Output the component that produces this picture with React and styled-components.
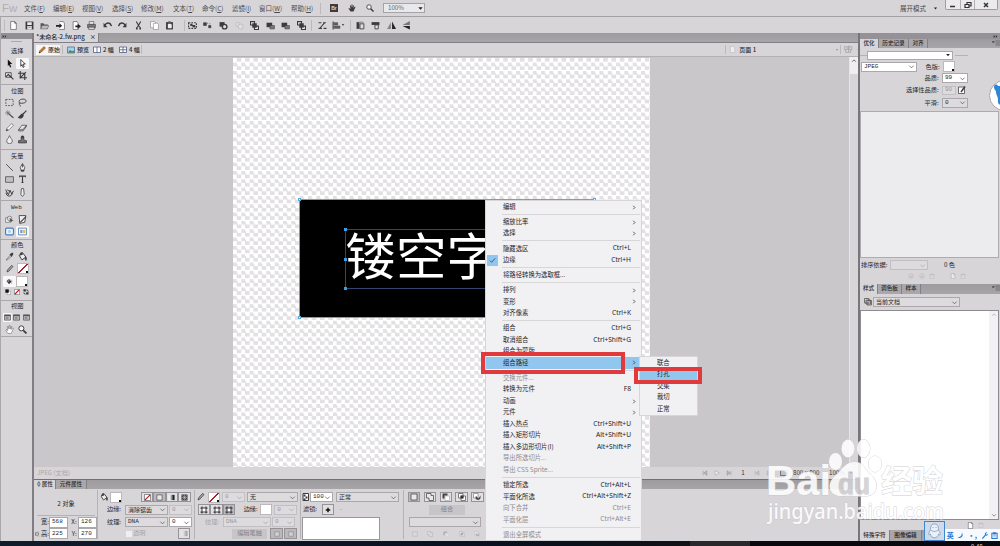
import React from "react";
import styled, { createGlobalStyle, css } from "styled-components";

const Global = createGlobalStyle`
  * { box-sizing: border-box; }
  body { margin: 0; overflow: hidden; background: #d7d5d8; }
`;

/* ---------- icons: 16-unit grid ---------- */
const S = "#3c3b3e";
const glyphs = {
  page: <path d="M3 1h7l3 3v11H3z M10 1v3h3" fill="#fff" stroke={S} />,
  save: <><path d="M1 1h14v14H1z" fill="#3a393c" /><path d="M4 2h8v5H4z M4 9h8v6H4z" fill="#e9e8ea" /><path d="M6 11h4" stroke={S} /></>,
  folder: <><path d="M1 4h5l2 2h6v8H1z" fill="#555" /><path d="M1 14l3-6h12l-3 6z" fill="#bbb" stroke="#666" /></>,
  importf: <><path d="M6 1h7l2 3v11H6" fill="#fff" stroke={S} /><path d="M0 7h6V4l5 4.500-5 4.500V10H0z" fill="#222" /></>,
  exportf: <><path d="M2 1h7l2 3v11H2z" fill="#fff" stroke={S} /><path d="M6 8h4V5l6 4.500-6 4.500V11H6z" fill="#222" /></>,
  print: <><path d="M4 1h8v5H4z" fill="#eee" stroke={S} /><path d="M1 6h14v6H1z" fill="#77767a" stroke={S} /><path d="M3 11h10v4H3z" fill="#ddd" stroke={S} /></>,
  undo: <><path d="M3 8c3-6 10-6 12 1" fill="none" stroke={S} strokeWidth="2.500" /><path d="M1 3v8h7z" fill={S} /></>,
  redo: <><path d="M13 8C10 2 3 2 1 9" fill="none" stroke={S} strokeWidth="2.500" /><path d="M15 3v8H8z" fill={S} /></>,
  cut: <><path d="M4 1l6 10M12 1L6 11" stroke={S} strokeWidth="2" /><path d="M5 11v4M11 11v4" stroke={S} strokeWidth="3" /></>,
  copy: <><path d="M1 1h7l2 2v9H1z" fill="#fff" stroke="#777" /><path d="M6 4h7l2 2v9H6z" fill="#fff" stroke="#777" /></>,
  paste: <><path d="M2 2h12v13H2z" fill="#333" /><path d="M5 5h6l1 2v6H5z" fill="#eee" /><path d="M6 0h4v3H6z" fill="#777" /></>,
  group: <><path d="M1 3h14v10H1z" fill="none" stroke={S} strokeDasharray="3 2" strokeWidth="2" /><path d="M4 5h4v4H4zM8 7h5v4H8z" fill={S} /></>,
  ungroup: <path d="M1 3h5v5H1zM10 8h4v4h-4zM7 4h2M11 5h2" fill={S} stroke={S} />,
  join: <><path d="M1 2h9v8H1z" fill={S} /><circle cx="10" cy="10" r="4" fill="#ddd" stroke={S} strokeWidth="2.500" /></>,
  split: <><circle cx="5" cy="6" r="4" fill="#ddd" stroke="#999" /><circle cx="10" cy="10" r="4.500" fill="#e9e9e9" stroke="#888" /></>,
  front: <><path d="M1 1h7v6H1zM8 9h7v6H8z" fill="#eee" stroke={S} strokeWidth="2" /><path d="M4 4h8v8H4z" fill={S} /></>,
  back: <><path d="M1 3h10v8H1z" fill={S} /><path d="M7 8h8v6H7z" fill="#777" stroke={S} /></>,
  snap: <><path d="M1 3h5M1 13h6M10 13h5M4 12l8-9M9 3h5" stroke={S} strokeWidth="2" /></>,
  align: <><path d="M2 1v14" stroke={S} strokeWidth="2" /><path d="M4 3h6v4H4zM4 9h10v4H4z" fill="#666" stroke={S} /></>,
  rotl: <><path d="M1 2h5v12H1z" fill={S} /><path d="M7 5h7v9H7z" fill="#ddd" stroke={S} strokeWidth="1.500" /><path d="M6 2h6l2 2" stroke={S} fill="none" /></>,
  rotr: <><path d="M1 2h14v5H1z" fill={S} /><path d="M7 7h6v7H7z" fill="#ddd" stroke={S} strokeWidth="1.500" /></>,
  fliph: <><path d="M7 2v12H0z" fill="#888" /><path d="M9 1l7 13H9z" fill="#222" /></>,
  flipv: <><path d="M14 7V0L1 7z" fill="#777" /><path d="M14 9v6L1 9z" fill="#222" /></>,
  hand: <path d="M5 15L1 9l1-1 3 2-1-7 1-1 2 5V1h2v6l2-5 1 1-1 5 3-3 1 1-4 9z" fill={S} />,
  handw: <path d="M5 15L1 9l1-1 3 2-1-7 1-1 2 5V1h2v6l2-5 1 1-1 5 3-3 1 1-4 9z" fill="#fff" stroke="#666" />,
  zoom: <><circle cx="6" cy="6" r="4.500" fill="#f4f4f4" stroke={S} strokeWidth="1.700" /><path d="M9.500 9.500L15 15" stroke={S} strokeWidth="3" /></>,
  arrow: <path d="M5 1l8 8H9l2 5-2 1-2-5-2 3z" fill="#111" />,
  arroww: <path d="M5 1l8 8H9l2 5-2 1-2-5-2 3z" fill="#fff" stroke="#111" strokeWidth="1.300" />,
  scale: <><path d="M1 3h10v8H1z" fill="#eee" stroke={S} strokeWidth="1.500" /><path d="M2 10l4-4 3 4M8 8l7 7" stroke={S} strokeWidth="2" fill="none" /></>,
  crop: <path d="M4 0v12h12M0 4h12v12M3 13L14 2" stroke={S} strokeWidth="2" fill="none" />,
  marquee: <path d="M1.500 2.500h13v11h-13z" fill="none" stroke={S} strokeWidth="1.400" strokeDasharray="3 2" />,
  lasso: <path d="M4 10C0 7 2 2 9 2s7 6 1 7c-5 1-7-1-8 1s3 2 2 5" fill="none" stroke={S} strokeWidth="1.600" />,
  wand: <><path d="M6 6l9 8" stroke={S} strokeWidth="2" /><path d="M5 0v10M0 5h10M2 2l6 6M8 2L2 8" stroke="#666" /></>,
  brush: <path d="M15 1L8 8M8 7c-4 0-3 5-7 6 4 3 9 0 8-5z" fill={S} stroke={S} strokeWidth="2" />,
  pencil: <><path d="M2 14l2-5 8-8 3 3-8 8z" fill="#fff" stroke={S} /><path d="M2 14l1-4 3 3z" fill={S} /></>,
  eraser: <path d="M1 12l6-8h8l-6 8zM1 12v2h8l6-8V4" fill="#eee" stroke={S} strokeWidth="1.300" />,
  drop: <path d="M8 1c1 4 5 6 5 10a5 4.500 0 0 1-10 0C3 7 7 5 8 1z" fill="#eee" stroke="#555" strokeWidth="1.400" />,
  stamp: <><circle cx="8" cy="4" r="3" fill={S} /><path d="M6 5h4l1 5h4v4H1v-4h4z" fill="#777" stroke={S} strokeWidth="1.400" /></>,
  line: <path d="M2 2l12 12" stroke={S} strokeWidth="1.500" />,
  pen: <><path d="M8 1L4 8l2 6h4l2-6zM8 2v6" fill="#eee" stroke={S} strokeWidth="1.400" /><path d="M5 12h6v3H5z" fill={S} /></>,
  rect: <path d="M1 3h14v10H1z" fill="#c2c1c4" stroke="#555" strokeWidth="1.500" />,
  type: <path d="M2 1h12v4l-2-2H9v10l2 1H5l2-1V3H4L2 5z" fill={S} />,
  freeform: <path d="M1 3l5 9 3-8 3 7 3-6M2 8c0 8 9 8 11 2M4 3l4 3" fill="none" stroke={S} strokeWidth="1.700" />,
  knife: <path d="M6 1h4l1 10-3 4-3-3z" fill="#eee" stroke="#555" strokeWidth="1.600" />,
  hotspot: <><path d="M1 5h7v8H1z" fill="#eee" stroke="#555" /><circle cx="8" cy="6" r="4" fill="#ddd" stroke="#555" /><path d="M8 5l7 5-3 1-2 3z" fill="#555" /></>,
  slice: <><path d="M2 1h12l-2 12-9 2z" fill="#eee" stroke={S} strokeWidth="1.500" /><path d="M4 13L14 3" stroke={S} strokeWidth="2" /></>,
  hide: <><rect x="1" y="2" width="14" height="12" rx="2" fill="#e9f3fd" stroke="#437eb9" strokeWidth="2" /><path d="M5 5v6h6V5z" fill="#a7cbed" stroke="#fff" /></>,
  show: <><path d="M1 2h14v12H1z" fill="#fff" stroke="#5279a4" strokeWidth="1.500" /><path d="M4 5h4v6H4z" fill="#739bc8" /><path d="M9 5h4v6H9z" fill="#e5b95a" /></>,
  dropper: <><path d="M2 14l7-8 2 2-7 6z" fill="#eee" stroke={S} /><path d="M8 4l5-3 2 2-3 6z" fill={S} /></>,
  bucket: <><path d="M2 6l6-5 6 8-7 5z" fill="#eee" stroke={S} strokeWidth="1.700" /><path d="M4 6C3 0 8-1 8 5M13 8c3 2 3 5 1 7-2-2-1-4-1-7" fill={S} stroke={S} /></>,
  penc: <path d="M2 14l1-4 8-9 3 2-8 9z" fill="#aaa" stroke={S} strokeWidth="1.500" />,
  fill: <><path d="M1 7l6-5 6 6-6 6z" fill={S} /><path d="M5 3v6M8 5h5v8" stroke="#aaa" fill="none" strokeWidth="2" /></>,
  none: <><path d="M1 1h14v14H1z" fill="#fff" stroke="#555" strokeWidth="1.500" /><path d="M14 2L2 14" stroke="#b51c2b" strokeWidth="3" /></>,
  swap: <path d="M2 1h5v5H2zM9 9h5v5H9zM9 2c4 0 5 2 5 5M2 9c0 4 3 5 5 5" fill={S} stroke={S} strokeWidth="1.500" />,
  bw: <><path d="M6 6h9v9H6z" fill="#fff" stroke="#555" /><path d="M1 1h9v9H1z" fill="#111" /></>,
  win: <><path d="M1 2h14v12H1z" fill="#bbb" stroke="#444" strokeWidth="1.500" /><path d="M1 2h14v3H1z" fill="#555" /><path d="M4 7h6v4H4z" fill="#888" /></>,
  pic: <><path d="M1 2h14v12H1z" fill="#a5d1ee" stroke="#3c7195" strokeWidth="1.500" /><path d="M2 13l4-5 4 3 3-2 2 4z" fill="#47813a" /></>,
  two: <path d="M1 2h14v11H1zM8 2v11" fill="#fff" stroke="#46577c" strokeWidth="1.500" />,
  four: <path d="M1 2h14v11H1zM8 2v11M1 7.500h14" fill="#fff" stroke="#46577c" strokeWidth="1.500" />,
  orange: <><path d="M2 14l2-5 8-8 3 3-8 8z" fill="#c77a28" stroke="#76430f" /><path d="M2 14l1-3 2 2z" fill="#222" /></>,
  solid: <path d="M2 2h12v12H2z" fill="#e9e8eb" stroke="#444" strokeWidth="1.500" />,
  grad: <><path d="M1 2h5v12H1z" fill="#eee" /><path d="M6 2h4v12H6z" fill="#999" /><path d="M10 2h5v12h-5z" fill="#222" /></>,
  pattern: <><path d="M1 1h14v14H1z" fill="#444" /><path d="M3 3l10 10M13 3L3 13M8 2v12M2 8h12" stroke="#ddd" /></>,
  stroke: <><path d="M4 4h8v8H4z" fill="#fff" stroke={S} strokeWidth="2" /><path d="M1 4h3M12 4h3M1 12h3M12 12h3M4 1v3M12 1v3M4 12v3M12 12v3" stroke={S} strokeWidth="2.500" /></>,
  union: <path d="M1 1h9v4h5v10H6v-5H1z" fill="#e9e8eb" stroke="#444" strokeWidth="1.500" />,
  punch: <><path d="M6 6h9v9H6z" fill="#fff" stroke="#999" /><path d="M1 1h10v4H5v6H1z" fill="#444" /></>,
  inter: <><path d="M1 1h9v9H1zM6 6h9v9H6z" fill="#fff" stroke="#555" strokeWidth="1.500" /><path d="M5 5h6v6H5z" fill="#333" /></>,
  cropp: <><path d="M1 1h9v9H1z" fill="#fff" stroke="#555" /><path d="M15 9a5 5 0 1 1-9-3l5 5 4-6z" fill="#444" /></>,
  add: <path d="M8 2v12M2 8h12" stroke="#111" strokeWidth="4" />,
  opacity: <><path d="M2 1h11v14H2z" fill="#fff" stroke={S} strokeWidth="2" /><path d="M3 3h4v4H3zM7 7h4v4H7zM3 11h4v3H3z" fill={S} /></>,
  chain: <><path d="M15 1H8v4M15 15H8v-4" stroke="#aaa" fill="none" /><rect x="4" y="5" width="8" height="6" fill="none" stroke="#555" strokeWidth="1.600" /></>,
  edit: <><path d="M1 2h12v13H1z" fill="#fff" stroke={S} strokeWidth="1.500" /><path d="M14 1L6 12" stroke={S} strokeWidth="3" /></>,
  trash: <path d="M3 5h10v10H3zM1 4h14M6 1h4" stroke="#999" fill="#ddd" strokeWidth="1.500" />,
  ball: <><circle cx="8" cy="8" r="6" fill="#ddd" stroke="#888" strokeWidth="1.500" /><path d="M4 8l4 4 5-5" fill="#999" /></>,
  docs: <path d="M1 1h9v9H1zM6 5h9v9H6zM4 4h9v8H4z" fill="#ddd" stroke="#555" strokeWidth="1.600" />,
  first: <path d="M3 2v12M13 2v12L5 8z" fill="#bbb" stroke="#777" />,
  play: <path d="M3 2v12l11-6z" fill="#eee" stroke="#888" />,
  last: <path d="M13 2v12M3 2v12l8-6z" fill="#bbb" stroke="#777" />,
  chev: <path d="M3 6l5 5 5-5" fill="none" stroke="#555" strokeWidth="1.700" />,
  up: <path d="M3 10l5-5 5 5" fill="none" stroke="#444" strokeWidth="2" />,
  right: <path d="M5 4l4 4-4 4" fill="none" stroke="#333" strokeWidth="1.800" />,
  tri: <path d="M3 5h10l-5 6z" fill="#222" />,
  check: <path d="M2 8l4 4 8-9" fill="none" stroke="#214c71" strokeWidth="1.900" />,
  moon: <path d="M11 1c6 8-3 16-10 11C8 12 12 8 11 1z" fill="#287bd2" />,
  wrench: <path d="M2 14l7-8c-1-4 3-6 5-5l-3 3 2 2 3-2c0 4-3 5-5 4l-7 8z" fill="#287bd2" />,
  clip: <><path d="M2 3h12v12H2z" fill="none" stroke="#287bd2" strokeWidth="2.500" /><path d="M5 1h6v4H5zM5 8h6M5 11h6" fill="#287bd2" stroke="#287bd2" /></>,
  menu: <path d="M0 5h5L2.500 8zM7 4h9M7 8h9M7 12h9" fill="#444" stroke="#555" strokeWidth="1.300" />,
  collapse: <path d="M2 3l5 5-5 5zM9 3l5 5-5 5z" fill="#333" />,
  fwpage: <path d="M3 1h7l3 3v11H3z" fill="#eee" stroke="#aaa" />,
  pages: <path d="M1 3h5v5H1zM9 3h5v5H9zM3 8v5h9V8M8 1v12" fill="none" stroke="#888" strokeWidth="1.500" />,
};

const Svg = styled.svg`
  flex: none;
  display: block;
  opacity: ${(p) => p.$o ?? 1};
  margin-left: ${(p) => p.$ml ?? 0}px;
`;
const Icon = ({ n, s = 9, o, ml }) => (
  <Svg width={s} height={s} viewBox="0 0 16 16" $o={o} $ml={ml}>{glyphs[n]}</Svg>
);

/* ---------- frame ---------- */
const Window = styled.div`
  position: relative;
  width: 1000px;
  height: 546px;
  display: flex;
  flex-direction: column;
  overflow: hidden;
  background: #d7d5d8;
  color: #29282a;
  font: 6.2px/1 "Noto Sans CJK SC", "Noto Sans", sans-serif;
  white-space: nowrap;
`;
const MenuBar = styled.header`
  height: 17px;
  flex: none;
  display: flex;
  align-items: center;
  border-bottom: 1px solid #a3a1a4;
`;
const Logo = styled.b`
  width: 23px;
  padding-left: 2px;
  color: #b2b0b3;
  font: 11.500px/15px "Liberation Sans", sans-serif;
`;
const MenuName = styled.span`
  width: ${(p) => p.$w}px;
  color: #4b494c;
  font-size: 6.500px;
  padding-left: 1px;
  u { text-underline-offset: 1px; text-decoration-thickness: 0.5px; }
`;
const Cell = styled.span`
  width: ${(p) => p.$w ?? 15.6}px;
  height: ${(p) => p.$h ?? 12}px;
  flex: none;
  display: flex;
  align-items: center;
  justify-content: center;
`;
const Divider = styled.i`
  width: 1px;
  height: ${(p) => p.$h ?? 11}px;
  flex: none;
  margin: 0 ${(p) => p.$mr ?? 0}px 0 ${(p) => p.$ml ?? 0}px;
  background: #bbb9bc;
`;
const Bridge = styled.b`
  width: 8px;
  height: 8px;
  background: #3d3b3e;
  color: #ddd;
  font: bold 5px/8px "Liberation Sans", sans-serif;
  text-align: center;
`;
const Spacer = styled.i`flex: 1;`;
const ZoomBox = styled.div`
  width: 42px;
  height: 10px;
  margin-left: 4px;
  display: flex;
  align-items: center;
  justify-content: space-between;
  padding-left: 4px;
  border: 1px solid #a5a3a6;
  background: #e9e8ea;
  color: #666;
`;
const WinButtons = styled.div`
  align-self: flex-start;
  display: flex;
  width: 53px;
  height: 10px;
  margin: 0 2px 0 7px;
  border: 1px solid #9f9da0;
  border-top: 0;
  border-radius: 0 0 2px 2px;
  background: #ebeaec;
`;
const WinButton = styled.span`
  width: ${(p) => p.$w}px;
  height: 9px;
  border-right: 1px solid #b2b0b3;
  display: flex;
  align-items: center;
  justify-content: center;
  &:last-child { border: 0; }
`;
const ToolBar = styled.div`
  height: 16px;
  flex: none;
  display: flex;
  align-items: center;
  padding-left: 3px;
  border-left: 1px solid #aaa;
`;
const Main = styled.main`
  height: 508px;
  flex: none;
  display: flex;
`;

/* ---------- tool palette ---------- */
const Palette = styled.aside`
  width: 34px;
  flex: none;
  border-right: 2px solid #807e82;
  border-left: 1px solid #aaa8ab;
`;
const PaletteHead = styled.div`
  height: 6px;
  background: #918f93;
  padding: 0 1px;
  display: flex;
  align-items: center;
`;
const Grip = styled.i`
  display: block;
  width: 11px;
  height: 3px;
  margin: 2px auto 0;
  border-top: 1px solid #aaa8ab;
`;
const Section = styled.section`
  height: ${(p) => p.$h}px;
  border-bottom: 1px solid #aaa8ab;
  padding-left: 2px;
`;
const SectionName = styled.div`
  height: ${(p) => p.$h ?? 12}px;
  display: flex;
  align-items: center;
  padding-left: 8px;
  font: ${(p) => (p.$mono ? '6px "Liberation Mono", monospace' : "inherit")};
`;
const ToolRow = styled.div`
  height: ${(p) => p.$h ?? 12.3}px;
  display: flex;
  align-items: center;
`;
const Tool = styled.span`
  width: ${(p) => p.$w ?? 13}px;
  height: ${(p) => p.$h ?? 11.5}px;
  display: flex;
  align-items: center;
  justify-content: center;
  border-radius: 1px;
  background: ${(p) => (p.$on ? "#f8f7f9" : "none")};
`;

/* ---------- workspace ---------- */
const Work = styled.div`
  width: 824px;
  flex: none;
  display: flex;
  flex-direction: column;
`;
const TabStrip = styled.div`
  height: ${(p) => p.$h}px;
  flex: none;
  display: flex;
  align-items: stretch;
  background: linear-gradient(#9d9b9e, #a7a5a8);
  border-bottom: ${(p) => (p.$line ? "1px solid #828084" : 0)};
`;
const Tab = styled.span`
  width: ${(p) => p.$w}px;
  display: flex;
  align-items: center;
  justify-content: center;
  gap: 5px;
  background: ${(p) => (p.$on ? "#d7d5d8" : "#a9a7aa")};
  border-right: 1px solid #828084;
  font-size: ${(p) => p.$fs ?? 5.6}px;
  font-weight: 500;
`;
const ViewRow = styled.div`
  height: 14px;
  flex: none;
  display: flex;
  align-items: center;
  border-bottom: 1px solid #b2b0b3;
  padding-left: 2px;
`;
const ViewMode = styled.span`
  width: ${(p) => p.$w}px;
  height: 10px;
  display: flex;
  align-items: center;
  gap: 2px;
  padding-left: 2px;
  font-size: 6px;
  font-weight: 500;
  background: ${(p) => (p.$on ? "#f6f5f7" : "none")};
`;
const Stage = styled.div`
  height: 410px;
  flex: none;
  display: flex;
  background: #c9c7ca;
`;
const Artboard = styled.div`
  position: relative;
  width: 417px;
  margin: 1px auto 0 199px;
  background: repeating-conic-gradient(#e2e0e3 0 25%, #fff 0 50%) 0 0 / 8.333px 8.333px;
`;
const BlackRect = styled.div`
  position: absolute;
  left: 66px;
  top: 141px;
  width: 296px;
  height: 119px;
  border: 1px solid #5fa9cf;
  border-radius: 2px;
  background: #000;
`;
const TextBox = styled.div`
  position: absolute;
  left: 44.500px;
  top: 29px;
  width: 207px;
  height: 60px;
  border: 1px solid #30476f;
  color: #fff;
  font: 400 50.500px/46px "Noto Sans CJK SC", sans-serif;
`;
const Handle = styled.i`
  position: absolute;
  left: ${(p) => p.$x}px;
  top: ${(p) => p.$y}px;
  width: 3px;
  height: 3px;
  background: ${(p) => (p.$open ? "#fff" : "#3ba0e3")};
  border: ${(p) => (p.$open ? "1px solid #5aa8d2" : 0)};
`;
const VScroll = styled.div`
  width: ${(p) => p.$w ?? 9}px;
  flex: none;
  display: flex;
  flex-direction: column;
  align-items: center;
  justify-content: space-between;
  background: #d7d5d8;
  border-left: 1px solid #e6e5e7;
`;
const ScrollTop = styled.i`
  width: 100%;
  height: 17px;
  padding-top: 1px;
  background: #efeef0;
`;
const Status = styled.div`
  height: 13px;
  flex: none;
  display: flex;
  align-items: center;
  padding: 0 0 0 3px;
  border-bottom: 1.500px solid #727074;
  color: #aaa8ab;
`;
const StatusNums = styled.span`
  width: ${(p) => p.$w}px;
  color: #333;
`;

/* ---------- form parts ---------- */
const Row = styled.div`
  height: ${(p) => p.$h ?? 12}px;
  flex: none;
  display: flex;
  align-items: center;
  padding-left: ${(p) => p.$pl ?? 0}px;
`;
const Label = styled.span`
  width: ${(p) => p.$w}px;
  flex: none;
  text-align: ${(p) => (p.$right ? "right" : "left")};
  color: ${(p) => (p.$dim ? "#a7a5a8" : "#29282a")};
  font-size: ${(p) => p.$fs ?? 6.2}px;
`;
const mono = css`font-family: "Liberation Mono", "Noto Sans CJK SC", monospace;`;
const Field = styled.span`
  width: ${(p) => p.$w}px;
  height: ${(p) => p.$h ?? 10}px;
  flex: none;
  margin-left: ${(p) => p.$ml ?? 0}px;
  padding: 0 1px 0 2px;
  display: flex;
  align-items: center;
  justify-content: space-between;
  border: 1px solid ${(p) => (p.$dim ? "#c1bfc2" : "#aaa8ab")};
  background: ${(p) => (p.$white ? "#fff" : "#dddbde")};
  color: ${(p) => (p.$dim ? "#99979a" : "#29282a")};
  font-size: 6px;
  ${(p) => p.$mono && mono}
`;
const Select = ({ children, o, ...rest }) => (
  <Field {...rest}><span>{children}</span><Icon n="chev" s={7} o={rest.$dim ? 0.4 : 1} /></Field>
);
const Swatch = styled.span`
  width: 12px;
  height: 11px;
  flex: none;
  margin-left: ${(p) => p.$ml ?? 0}px;
  border: 1px solid #bbb9bc;
  background:
    linear-gradient(#111, #111) 100% 100% / ${(p) => (p.$plain ? 0 : 2)}px 2px no-repeat,
    ${(p) => (p.$none ? "linear-gradient(135deg, #fff 44%, #a9222f 44% 56%, #fff 56%)" : "#fff")};
`;
const IconButton = styled.span`
  width: ${(p) => p.$w ?? 12.4}px;
  height: 10.500px;
  flex: none;
  margin-left: ${(p) => p.$ml ?? 0}px;
  border: 1px solid #959397;
  display: flex;
  align-items: center;
  justify-content: center;
  background: ${(p) => (p.$on ? "#bbb9bc" : "#e2e0e3")};
`;
const TextButton = styled.span`
  width: ${(p) => p.$w}px;
  height: 10px;
  margin-left: ${(p) => p.$ml ?? 0}px;
  display: flex;
  align-items: center;
  justify-content: center;
  background: #c7c5c8;
  color: #858387;
`;
const CheckBox = styled.i`
  width: 6px;
  height: 6px;
  margin-left: 28px;
  margin-right: 1px;
  background: #efeef0;
`;
const Props = styled.div`
  height: 52px;
  flex: none;
  display: flex;
`;
const Group = styled.div`
  width: ${(p) => p.$w}px;
  flex: none;
  margin: 1px 0 2px;
  padding-top: ${(p) => p.$pt ?? 1}px;
  border-right: ${(p) => (p.$last ? 0 : "1px solid #b4b2b5")};
`;
const Heading = styled.div`
  height: 26px;
  margin: 0 2px 0.500px 3px;
  padding-top: 3px;
  display: flex;
  align-items: center;
  justify-content: center;
  border-bottom: 1px solid #b4b2b5;
  font-size: 6.300px;
`;
const FilterGroup = styled.div`display: flex; flex-direction: column;`;
const FilterList = styled.div`
  width: 78px;
  height: 23px;
  margin: 1px 0 0 1px;
  border: 1px solid #99979a;
  background: #fff;
`;

/* ---------- right docks ---------- */
const Dock = styled.aside`
  width: 142px;
  flex: none;
  display: flex;
  flex-direction: column;
  border-left: 2px solid #78767a;
`;
const DockHead = styled.div`
  height: 6px;
  flex: none;
  display: flex;
  align-items: center;
  justify-content: flex-end;
  padding-right: 2px;
  background: #949296;
`;
const Presets = styled.div`
  height: 13px;
  flex: none;
  display: flex;
  align-items: center;
  padding-top: 1px;
  i { width: 7px; height: 1px; background: #b4b2b5; }
  i:last-child { width: 13px; margin-left: 2px; }
`;
const ColorList = styled.div`
  height: 147px;
  flex: none;
  margin-right: 1px;
  border: 1px solid #adabad;
  background: #ecebee;
`;
const StyleList = styled.div`
  height: 210px;
  flex: none;
  margin-right: 1px;
  display: flex;
  justify-content: flex-end;
  border: 1px solid #8d8b8f;
  background: #fff;
`;
const StyleScroll = styled.div`
  width: 9px;
  display: flex;
  flex-direction: column;
  justify-content: space-between;
  align-items: center;
  padding: 1px 0;
  background: #f2f1f3;
`;
const TaskBar = styled.footer`
  height: 5px;
  flex: none;
  background: linear-gradient(90deg, #101b2b, #08111f 50%, #101216 69%, #29292c 69% 75%, #07090f 75%);
  overflow: hidden;
  padding-left: 971px;
  color: #ddd;
  font-size: 6px;
  line-height: 12px;
`;

/* ---------- popups ---------- */
const Popup = styled.nav`
  position: absolute;
  left: ${(p) => p.$x}px;
  top: ${(p) => p.$y}px;
  width: ${(p) => p.$w}px;
  height: ${(p) => p.$h}px;
  padding-top: ${(p) => p.$pt}px;
  background: #f1f0f2;
  border: 1px solid #d7d5d8;
`;
const Item = styled.div`
  height: 11.520px;
  display: flex;
  align-items: center;
  padding-right: ${(p) => (p.$arrow ? 3 : 10)}px;
  color: ${(p) => (p.$dim ? "#8d8b8f" : "#252426")};
  background: ${(p) => (p.$on ? "#91c6ef" : "none")};
  font-size: 6.350px;
`;
const Gutter = styled.span`
  width: ${(p) => p.$w}px;
  flex: none;
`;
const Checked = styled.span`
  width: 11px;
  height: 11px;
  display: flex;
  align-items: center;
  justify-content: center;
  margin-left: 1px;
  background: #91c6ef;
`;
const Caption = styled.span`flex: 1;`;
const Keys = styled.span`
  font-family: "Noto Sans", sans-serif;
  font-size: 6.650px;
`;
const Rule = styled.div`
  height: 3.550px;
  padding: 1px 1px 0 16px;
  &::before { content: ""; display: block; height: 1px; background: #d7d6d9; }
`;
const RedFrame = styled.div`
  position: absolute;
  left: ${(p) => p.$x}px;
  top: ${(p) => p.$y}px;
  width: ${(p) => p.$w}px;
  height: ${(p) => p.$h}px;
  border: 4px solid #e13a3d;
`;

/* ---------- overlays ---------- */
const Watermark = styled.div`
  position: absolute;
  left: 765px;
  top: 436px;
  width: 185px;
  height: 92px;
  opacity: 0.88;
  color: #fff;
  svg { display: block; overflow: visible; }
`;
const Badge = styled.div`
  position: absolute;
  left: 989px;
  top: 80px;
  width: 31px;
  height: 31px;
  border: 1px solid #aaa8ab;
  border-radius: 50%;
  background: #fff;
`;
const Ime = styled.div`
  position: absolute;
  left: 924px;
  top: 521px;
  display: flex;
  align-items: flex-end;
`;
const ImeLogo = styled.div`
  width: 21px;
  height: 20px;
  border: 1px solid #3e86cf;
  background: #cfdbea;
`;
const ImeBar = styled.div`
  width: 55px;
  height: 12px;
  display: flex;
  align-items: center;
  justify-content: space-around;
  background: #f6f9fd;
  color: #287bd2;
  font-weight: 700;
  font-size: 7px;
`;

const menus = [["文件", "F", 29], ["编辑", "E", 29], ["视图", "V", 30], ["选择", "S", 29], ["修改", "M", 32], ["文本", "T", 29], ["命令", "C", 30], ["滤镜", "I", 27], ["窗口", "W", 32], ["帮助", "H", 28]];
const bar1 = ["page", "save", "folder", "importf", "exportf", "print", "undo", "redo", "cut", "copy", "paste"];
const bar2 = ["group", "ungroup", "join", "split", "front", "back", "back", "front"];
const bar3 = ["rotl", "rotr", "fliph", "flipv"];

const context = [
  ["编辑", ">"], 0,
  ["缩放比率", ">"], ["选择", ">"], 0,
  ["隐藏选区", "Ctrl+L"], ["边缘", "Ctrl+H", "check"], 0,
  ["将路径转换为选取框...", ""], 0,
  ["排列", ">"], ["变形", ">"], ["对齐像素", "Ctrl+K"], 0,
  ["组合", "Ctrl+G"], ["取消组合", "Ctrl+Shift+G"], ["组合为蒙版", ""], ["组合路径", ">", "on"], 0,
  ["交换元件...", "", "dim"], ["转换为元件", "F8"], ["动画", ">"], ["元件", ">"],
  ["插入热点", "Ctrl+Shift+U"], ["插入矩形切片", "Alt+Shift+U"], ["插入多边形切片(I)", "Alt+Shift+P"],
  ["导出所选切片...", "", "dim"], ["导出 CSS Sprite...", "", "dim"], 0,
  ["锁定所选", "Ctrl+Alt+L"], ["平面化所选", "Ctrl+Alt+Shift+Z"],
  ["向下合并", "Ctrl+E", "dim"], ["平面化层", "Ctrl+Alt+E", "dim"], 0,
  ["退出全屏模式", "", "dim"],
];

const Pair = ({ a, b, on, h }) => (
  <ToolRow $h={h}><Tool><Icon n={a} /></Tool><Tool $on={on}><Icon n={b} /></Tool></ToolRow>
);

function ToolPalette() {
  return (
    <Palette>
      <PaletteHead><Icon n="collapse" s={5} /></PaletteHead>
      <Grip />
      <Section $h={41}>
        <SectionName $h={13.5}>选择</SectionName>
        <Pair a="arrow" b="arroww" on /><Pair a="scale" b="crop" />
      </Section>
      <Section $h={65}>
        <SectionName $h={11.5}>位图</SectionName>
        <Pair a="marquee" b="lasso" /><Pair a="wand" b="brush" /><Pair a="pencil" b="eraser" /><Pair a="drop" b="stamp" />
      </Section>
      <Section $h={51}>
        <SectionName $h={11.5}>矢量</SectionName>
        <Pair a="line" b="pen" /><Pair a="rect" b="type" /><Pair a="freeform" b="knife" />
      </Section>
      <Section $h={39}>
        <SectionName $mono>Web</SectionName>
        <Pair a="hotspot" b="slice" /><Pair a="hide" b="show" on />
      </Section>
      <Section $h={61}>
        <SectionName $h={10}>颜色</SectionName>
        <Pair a="dropper" b="bucket" />
        <ToolRow $h={12.7}><Tool><Icon n="penc" s={8} /></Tool><Swatch $none $ml={1} /></ToolRow>
        <ToolRow $h={12.5}><Tool $on $h={11}><Icon n="fill" s={7} /></Tool><Swatch $ml={0} /></ToolRow>
        <ToolRow $h={10}><Tool $w={9}><Icon n="bw" s={6} /></Tool><Tool $w={9}><Icon n="none" s={6} /></Tool><Tool $w={9}><Icon n="swap" s={6} /></Tool></ToolRow>
      </Section>
      <Section $h={36}>
        <SectionName $h={10}>视图</SectionName>
        <ToolRow $h={12}><Tool $w={9} $h={9} $on><Icon n="win" s={7} /></Tool><Tool $w={9}><Icon n="win" s={7} /></Tool><Tool $w={10}><Icon n="win" s={7} /></Tool></ToolRow>
        <Pair a="handw" b="zoom" h={12} />
      </Section>
    </Palette>
  );
}

function Properties() {
  return (
    <Props>
      <Group $w={64} $pt={0}>
        <Heading>2 对象</Heading>
        <Row $h={11.6} $pl={0}><Icon n="chain" s={6} o={0} /><Label $w={9} $right $fs={6.3}>宽:</Label><Field $w={19} $h={11} $white $mono>568</Field><Label $w={10} $right>X:&nbsp;</Label><Field $w={19} $h={11} $white $mono>126</Field></Row>
        <Row $h={11.6} $pl={0}><Icon n="chain" s={6} /><Label $w={9} $right $fs={6.3}>高:</Label><Field $w={19} $h={11} $white $mono>225</Field><Label $w={10} $right>Y:&nbsp;</Label><Field $w={19} $h={11} $white $mono>270</Field></Row>
      </Group>
      <Group $w={97}>
        <Row $pl={2}><Icon n="bucket" s={8} /><Swatch $ml={2} /><IconButton $ml={19}><Icon n="none" s={7} /></IconButton><IconButton $on><Icon n="solid" s={7} /></IconButton><IconButton><Icon n="grad" s={7} /></IconButton><IconButton><Icon n="pattern" s={7} /></IconButton></Row>
        <Row $h={13} $pl={9}><Label $w={18}>边缘:</Label><Select $w={43}>消除锯齿</Select><Select $w={23} $ml={1} $dim $mono>0</Select></Row>
        <Row $pl={9}><Label $w={18}>纹理:</Label><Select $w={43} $mono>DNA</Select><Select $w={23} $ml={1} $white $mono>0</Select></Row>
        <Row $h={11}><CheckBox /><Label $w={45} $dim>透明</Label><IconButton><Icon n="grad" s={7} o={0.3} /></IconButton></Row>
      </Group>
      <Group $w={106}>
        <Row $pl={2}><Icon n="penc" s={8} /><Swatch $none $ml={3} /><Select $w={23} $ml={2} $dim $mono>0</Select><Select $w={51} $ml={2}>无</Select></Row>
        <Row $h={13} $pl={3}><IconButton><Icon n="stroke" s={8} /></IconButton><IconButton><Icon n="stroke" s={8} /></IconButton><IconButton $on><Icon n="stroke" s={8} /></IconButton><Label $w={24} $right>边缘:&nbsp;</Label><Swatch $plain $ml={1} /><Select $w={23} $ml={2} $dim $mono>0</Select></Row>
        <Row $pl={10}><Label $w={18} $dim>纹理:</Label><Select $w={48} $dim $mono>DNA</Select><Select $w={23} $ml={1} $dim $mono>0</Select></Row>
        <Row $h={11} $pl={37}><TextButton $w={35}>编辑笔触</TextButton><IconButton $on $w={13} $ml={3}><Icon n="solid" s={6} o={0.5} /></IconButton><IconButton $on $w={13} $ml={1}><Icon n="solid" s={6} o={0.5} /></IconButton></Row>
      </Group>
      <Group $w={103}>
        <FilterGroup>
          <Row $pl={1}><Icon n="opacity" s={8} /><Select $w={23} $white $mono>100</Select><Select $w={63} $ml={3}>正常</Select></Row>
          <Row $h={13} $pl={2}><Label $w={19}>滤镜:</Label><IconButton><Icon n="add" s={6} /></IconButton><Label $w={8} $right $dim>–</Label></Row>
          <FilterList />
        </FilterGroup>
      </Group>
      <Group $w={90} $last>
        <Row $pl={4}>{["solid", "union", "punch", "inter", "cropp"].map((n, i) => <IconButton key={n} $on={!i} $ml={i ? 3.4 : 0}><Icon n={n} s={8} /></IconButton>)}</Row>
        <Row $h={13} $pl={25}><TextButton $w={36}>组合</TextButton></Row>
        <Row $pl={5}><Select $w={72} /></Row>
        <Row $h={11} $pl={3}>{["solid", "union", "punch", "inter", "cropp"].map((n) => <Cell key={n}><Icon n={n} s={6} o={0.25} /></Cell>)}</Row>
      </Group>
    </Props>
  );
}

function Docks() {
  return (
    <Dock>
      <DockHead><Icon n="collapse" s={5} /></DockHead>
      <TabStrip $h={9}><Tab $on $w={19}>优化</Tab><Tab $w={30}>历史记录</Tab><Tab $w={19}>对齐</Tab><Spacer /><Icon n="menu" s={8} /></TabStrip>
      <Presets><i /><Field $w={86} $h={9} $white><span /><Icon n="tri" s={6} /></Field><i /></Presets>
      <Row $h={11.5} $pl={1}><Select $w={56} $white $mono>JPEG</Select><Label $w={24} $right>色版:&nbsp;</Label><Swatch $ml={2} /></Row>
      <Row $h={11.5}><Label $w={80} $right>品质:&nbsp;</Label><Select $w={26} $ml={2} $white $mono>99</Select></Row>
      <Row $h={12.5}><Label $w={80} $right>选择性品质:&nbsp;</Label><Field $w={14} $ml={2} $h={9} $dim $mono>90</Field><Icon n="edit" s={8} ml={2} /></Row>
      <Row $h={12.5}><Label $w={80} $right>平滑:&nbsp;</Label><Select $w={26} $ml={2} $mono>0</Select></Row>
      <Spacer />
      <ColorList />
      <Row $h={14} $pl={1}><Label $w={29}>排序依据:</Label><Select $w={38} $dim /><Label $w={27} $right>0 色</Label></Row>
      <Row $h={8} $pl={46}>{["ball", "ball", "trash", "", "page", "trash"].map((n, i) => <Cell key={i} $w={10.4}>{n && <Icon n={n} s={6} o={0.45} />}</Cell>)}</Row>
      <Row $h={4} />
      <TabStrip $h={10}><Tab $on $w={18}>样式</Tab><Tab $w={24}>调色板</Tab><Tab $w={19}>样本</Tab><Spacer /><Icon n="menu" s={8} /></TabStrip>
      <Row $h={16} $pl={4}><Icon n="docs" s={8} /><Select $w={87} $ml={1}>当前文档</Select></Row>
      <StyleList><StyleScroll><Icon n="up" s={6} o={0.4} /><Icon n="chev" s={6} /></StyleScroll></StyleList>
      <Row $h={10} $pl={107}><Icon n="page" s={7} /><Icon n="trash" s={6} ml={4} o={0.4} /></Row>
      <TabStrip $h={11}><Tab $on $w={30}>特殊字符</Tab><Tab $w={32}>图像编辑</Tab><Spacer /></TabStrip>
    </Dock>
  );
}

function ContextMenu() {
  return (
    <Popup $x={485} $y={200} $w={157} $h={341} $pt={0.3}>
      {context.map((it, i) => !it ? <Rule key={i} /> : (
        <Item key={i} $arrow={it[1] === ">"} $on={it[2] === "on"} $dim={it[2] === "dim"}>
          <Gutter $w={17}>{it[2] === "check" && <Checked><Icon n="check" s={7} /></Checked>}</Gutter>
          <Caption>{it[0]}</Caption>
          {it[1] === ">" ? <Icon n="right" s={7} /> : <Keys>{it[1]}</Keys>}
        </Item>
      ))}
    </Popup>
  );
}

function BaiduMark() {
  const st = { stroke: "#c9c8cb", strokeWidth: 0.9, paintOrder: "stroke" };
  return (
    <Watermark>
      <svg width="185" height="92" fill="#fff" fontFamily="'Liberation Sans', sans-serif" {...st}>
        <ellipse cx="70.500" cy="25.500" rx="6.500" ry="8.500" />
        <ellipse cx="83" cy="12.500" rx="6.500" ry="9" />
        <ellipse cx="98.500" cy="12.500" rx="6.500" ry="9" />
        <ellipse cx="110" cy="28" rx="6.500" ry="8" />
        <path d="M90 26c8 0 10 7 15 12 10 8 8 21-3 22-9 1-15-1-24 0-14 1-17-12-8-20 7-6 10-14 20-14z" />
        <text x="1" y="59" fontSize="42" fontWeight="bold" textLength="65" lengthAdjust="spacingAndGlyphs">Bai</text>
        <text x="73" y="58" fontSize="29" fontWeight="bold" fill="#d2d0d4" textLength="32" lengthAdjust="spacingAndGlyphs">du</text>
        <text x="116" y="56" fontSize="31" fontWeight="bold" fontFamily="'Noto Sans CJK SC', sans-serif">经验</text>
        <text x="3" y="83" fontSize="21" fontWeight="500" textLength="176" lengthAdjust="spacingAndGlyphs" fontFamily="'Noto Sans', sans-serif">jingyan.baidu.com</text>
      </svg>
    </Watermark>
  );
}

export default function App() {
  return (
    <Window>
      <Global />
      <MenuBar>
        <Logo>Fw</Logo>
        {menus.map(([t, k, w]) => <MenuName key={k} $w={w}>{t}(<u>{k}</u>)</MenuName>)}
        <Divider $ml={2} $mr={4} />
        <Cell $w={18}><Bridge>Br</Bridge></Cell>
        <Cell $w={18}><Icon n="hand" s={8} /></Cell>
        <Cell $w={18}><Icon n="zoom" s={8} /></Cell>
        <ZoomBox>100%<Icon n="tri" s={7} /></ZoomBox>
        <Spacer />
        <MenuName $w={34}>展开模式</MenuName>
        <Icon n="tri" s={5} />
        <WinButtons>
          <WinButton $w={15}><svg width="8" height="8"><path d="M1 5.500h5" stroke="#333" strokeWidth="1.500" /></svg></WinButton>
          <WinButton $w={15}><svg width="8" height="8"><path d="M3 3V1.500h4V5H5.500M1 3.500h4v3H1z" fill="none" stroke="#333" strokeWidth="1.200" /></svg></WinButton>
          <WinButton $w={22}><svg width="8" height="8"><path d="M2 2l4 4M6 2L2 6" stroke="#333" strokeWidth="1.500" /></svg></WinButton>
        </WinButtons>
      </MenuBar>
      <ToolBar>
        <Divider $mr={1} />
        {bar1.map((n) => <Cell key={n}><Icon n={n} /></Cell>)}
        <Divider $ml={6} />
        {bar2.map((n, i) => <Cell key={i}><Icon n={n} o={n === "split" ? 0.5 : 1} /></Cell>)}
        <Divider $ml={2} $mr={1} />
        <Cell $w={18}><Icon n="snap" /></Cell>
        <Cell $w={15}><Icon n="align" /><Icon n="tri" s={4} /></Cell>
        <Divider $ml={4} $mr={1} />
        {bar3.map((n) => <Cell key={n}><Icon n={n} /></Cell>)}
      </ToolBar>
      <Main>
        <ToolPalette />
        <Work>
          <TabStrip $h={10} $line><Tab $on $w={65} $fs={6.1}>*未命名-2.fw.png <span>×</span></Tab></TabStrip>
          <ViewRow>
            <ViewMode $on $w={24}><Icon n="orange" s={8} />原始</ViewMode>
            <Divider $h={9} $ml={2} $mr={2} />
            <ViewMode $w={26}><Icon n="pic" s={8} />预览</ViewMode>
            <ViewMode $w={26}><Icon n="two" s={8} />2 幅</ViewMode>
            <ViewMode $w={24}><Icon n="four" s={8} />4 幅</ViewMode>
            <Divider $h={9} />
            <Spacer />
            <Divider $h={9} $mr={1} />
            <ViewMode $w={108}><Icon n="fwpage" s={7} />&nbsp;页面 1</ViewMode>
            <Icon n="tri" s={4} o={0.4} />
            <Divider $h={9} $ml={1} $mr={3} />
            <Icon n="pages" s={9} o={0.6} />
            <Divider $h={1} $ml={4} />
          </ViewRow>
          <Stage>
            <Artboard>
              <BlackRect>
                <TextBox>镂空字<Handle $x={-2} $y={-2} /><Handle $x={-2} $y={28} /><Handle $x={-2} $y={57} /></TextBox>
                <Handle $open $x={-2} $y={-2} /><Handle $open $x={-2} $y={116} /><Handle $open $x={293} $y={-2} />
              </BlackRect>
            </Artboard>
            <VScroll><ScrollTop><Icon n="up" s={6} ml={1} /></ScrollTop><Icon n="chev" s={7} /></VScroll>
          </Stage>
          <Status>
            JPEG (文档)
            <Spacer />
            <Cell $w={12}><Icon n="first" s={6} /></Cell><Cell $w={12}><Icon n="play" s={6} /></Cell><Cell $w={12}><Icon n="last" s={6} /></Cell>
            <Cell $w={16}><StatusNums>1</StatusNums></Cell>
            <Cell $w={12}><Icon n="first" s={6} o={0.6} /></Cell><Cell $w={12}><Icon n="last" s={6} o={0.6} /></Cell><Cell $w={18}><Icon n="rect" s={8} /></Cell>
            <StatusNums $w={36}>800 x 800</StatusNums><StatusNums $w={19}>100%</StatusNums><Icon n="tri" s={6} /><Divider $h={1} $ml={3} />
          </Status>
          <TabStrip $h={9}><Tab $on $w={22}>◊属性</Tab><Tab $w={31}>元件属性</Tab><Spacer /></TabStrip>
          <Properties />
        </Work>
        <Docks />
      </Main>
      <TaskBar>9:48</TaskBar>

      <ContextMenu />
      <Popup $x={639} $y={356} $w={59} $h={60} $pt={0}>
        {["联合", "打孔", "交集", "裁切", "正常"].map((t) => <Item key={t} $on={t === "打孔"}><Gutter $w={17} /><Caption>{t}</Caption></Item>)}
      </Popup>
      <RedFrame $x={481} $y={352} $w={144} $h={22} />
      <RedFrame $x={634} $y={367} $w={68} $h={17} />
      <BaiduMark />
      <Ime>
        <ImeLogo>
          <svg width="19" height="18"><path d="M9.500 2c4 0 4 4 4 6 3 4 2 6 0 4 0 5-8 5-8 0-2 2-3 0 0-4 0-2 0-6 4-6z" fill="#e9f0f8" stroke="#8fa7c4" /><path d="M6 8c2 2 5 2 7 0M8 5v1M11 5v1" stroke="#8fa7c4" fill="none" /></svg>
        </ImeLogo>
        <ImeBar>英<Icon n="moon" s={7} /><span>•,</span><Icon n="wrench" s={7} /><Icon n="clip" s={7} /></ImeBar>
      </Ime>
      <Badge>
        <svg width="29" height="29"><path d="M4 6c0-3 3-3 4-1h10v18c-6 3-11 1-10-4 0-4-2-5-2-8 0-2-2-2-2-5z" fill="#2f86d8" /></svg>
      </Badge>
    </Window>
  );
}
